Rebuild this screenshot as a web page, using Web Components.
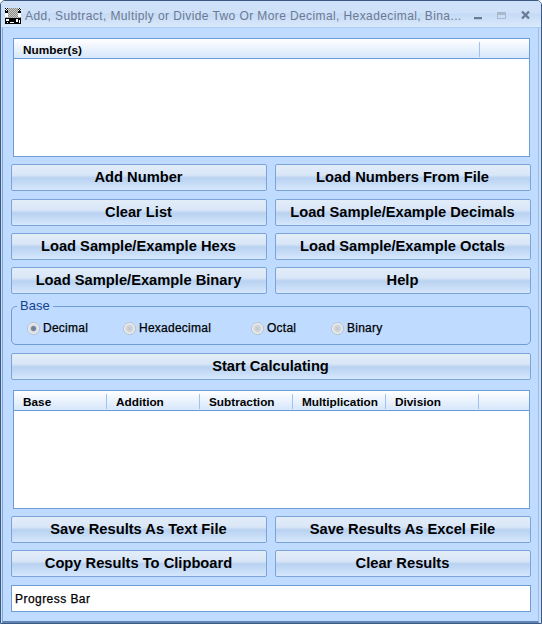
<!DOCTYPE html>
<html>
<head>
<meta charset="utf-8">
<title>Calculator</title>
<style>
  html, body { margin: 0; padding: 0; }
  body { width: 542px; height: 624px; overflow: hidden; font-family: "Liberation Sans", Arial, sans-serif; }
</style>
</head>
<body>
<calc-window title-text="Add, Subtract, Multiply or Divide Two Or More Decimal, Hexadecimal, Bina...">
  <list-view columns="Number(s):467,:49"></list-view>
  <button-grid class="top">
    <push-button>Add Number</push-button>
    <push-button>Load Numbers From File</push-button>
    <push-button>Clear List</push-button>
    <push-button>Load Sample/Example Decimals</push-button>
    <push-button>Load Sample/Example Hexs</push-button>
    <push-button>Load Sample/Example Octals</push-button>
    <push-button>Load Sample/Example Binary</push-button>
    <push-button>Help</push-button>
  </button-grid>
  <base-group></base-group>
  <push-button class="wide">Start Calculating</push-button>
  <list-view class="results" columns="Base:93,Addition:93,Subtraction:93,Multiplication:93,Division:93,:50"></list-view>
  <button-grid>
    <push-button>Save Results As Text File</push-button>
    <push-button>Save Results As Excel File</push-button>
    <push-button>Copy Results To Clipboard</push-button>
    <push-button>Clear Results</push-button>
  </button-grid>
  <progress-box>Progress Bar</progress-box>
</calc-window>

<script>
class CalcWindow extends HTMLElement {
  constructor() {
    super();
    this.attachShadow({mode: 'open'});
    this.shadowRoot.innerHTML = `
      <style>
        :host {
          display: flex;
          flex-direction: column;
          box-sizing: border-box;
          width: 542px;
          height: 624px;
          background: #c8dcf6;
          border: 1px solid #3b5a82;
          border-radius: 5px 5px 0 0;
          overflow: hidden;
        }
        #title {
          display: flex;
          align-items: center;
          height: 27px;
          flex: none;
          box-sizing: border-box;
          padding: 3px 0 0 4px;
          background: linear-gradient(#cfe1f8, #cfe1f8 45%, #c4daf6 50%, #dbe9fb);
          border-bottom: 1px solid #a9cdf5;
        }
        #text {
          margin-left: 4px;
          font-size: 12px;
          letter-spacing: 0.4px;
          color: #6b7a92;
          white-space: nowrap;
        }
        #controls { margin-left: auto; display: flex; margin-top: -3px; }
        #controls svg { display: block; }
        #client {
          flex: 1;
          display: flex;
          flex-direction: column;
          box-sizing: border-box;
          margin: 0 2px 0 1px;
          padding: 10px 0 8px 8px;
          background: #bfdbff;
          border-left: 1px solid #7fa6d8;
          border-right: 1px solid #9dbde6;
          border-bottom: 2px solid #5f84b6;
        }
      </style>
      <div id="title">
        <svg width="16" height="16" viewBox="0 0 16 16" shape-rendering="crispEdges">
          <defs>
            <pattern id="dots" width="2" height="2" patternUnits="userSpaceOnUse">
              <rect width="2" height="2" fill="#c8c8c8"/>
              <rect width="1" height="1" fill="#8e8e8e"/>
              <rect x="1" y="1" width="1" height="1" fill="#8e8e8e"/>
            </pattern>
            <pattern id="dither" width="2" height="2" patternUnits="userSpaceOnUse">
              <rect width="2" height="2" fill="#fff"/>
              <rect width="1" height="1" fill="#000"/>
              <rect x="1" y="1" width="1" height="1" fill="#000"/>
            </pattern>
          </defs>
          <rect width="16" height="16" fill="#fff"/>
          <rect x="0" y="0" width="4" height="3" fill="url(#dither)"/>
          <rect x="12" y="0" width="4" height="3" fill="url(#dither)"/>
          <rect x="3" y="0" width="10" height="9" fill="url(#dots)"/>
          <rect x="0" y="3" width="3" height="2" fill="#000"/>
          <rect x="13" y="3" width="3" height="2" fill="#000"/>
          <rect x="0" y="9" width="16" height="1" fill="url(#dots)"/>
          <rect x="0" y="10" width="16" height="6" fill="#000"/>
          <rect x="1" y="11" width="3" height="2" fill="#fff"/>
          <rect x="11" y="11" width="2" height="3" fill="#fff"/>
          <rect x="14" y="12" width="1" height="3" fill="#fff"/>
          <rect x="5" y="14" width="4" height="1" fill="#fff"/>
          <rect x="2" y="14" width="1" height="1" fill="#fff"/>
        </svg>
        <span id="text"></span>
        <div id="controls">
          <svg width="77" height="26" viewBox="0 0 77 26" shape-rendering="crispEdges">
            <rect x="10" y="16" width="8" height="2" fill="#6a7b93"/>
            <rect x="10" y="18" width="8" height="1" fill="#b4c8e2"/>
            <rect x="33.5" y="11.5" width="8" height="6" fill="none" stroke="#a9b8ca"/>
            <rect x="33" y="11" width="9" height="3" fill="#a9b8ca"/>
            <path d="M58 10.5l7 7M65 10.5l-7 7" stroke="#6a7b93" stroke-width="2.4" fill="none" shape-rendering="auto"/>
          </svg>
        </div>
      </div>
      <div id="client"><slot></slot></div>
    `;
  }

  connectedCallback() {
    this.shadowRoot.getElementById('text').textContent = this.getAttribute('title-text');
  }
}

class ListView extends HTMLElement {
  constructor() {
    super();
    this.attachShadow({mode: 'open'});
    this.shadowRoot.innerHTML = `
      <style>
        :host {
          display: block;
          box-sizing: border-box;
          height: 119px;
          margin: 0 0 7px 2px;
          width: 517px;
          background: #fff;
          border: 1px solid #6f9bd6;
        }
        :host(.results) { margin-top: 10px; }
        #head {
          display: flex;
          height: 20px;
          padding-top: 3px;
          box-sizing: border-box;
          background: linear-gradient(#ffffff, #d6e6fb);
          border-bottom: 1px solid #6f9bd6;
          font-size: 11.8px;
          font-weight: bold;
          color: #000;
        }
        .col {
          box-sizing: border-box;
          padding-left: 9px;
          line-height: 17px;
          border-right: 1px solid #9cc3f3;
          height: 15px;
          white-space: nowrap;
        }
        .col:last-child { border-right: none; }
      </style>
      <div id="head"></div>
    `;
  }

  connectedCallback() {
    const head = this.shadowRoot.getElementById('head');
    for (const spec of this.getAttribute('columns').split(',')) {
      const [name, width] = spec.split(':');
      const col = document.createElement('div');
      col.className = 'col';
      col.style.width = width + 'px';
      col.textContent = name;
      head.append(col);
    }
  }
}

class ButtonGrid extends HTMLElement {
  constructor() {
    super();
    this.attachShadow({mode: 'open'});
    this.shadowRoot.innerHTML = `
      <style>
        :host {
          display: grid;
          grid-template-columns: 256px 256px;
          column-gap: 8px;
          row-gap: 7px;
          width: 520px;
          margin-bottom: 8px;
        }
        :host(.top) { grid-template-rows: 28px 27px 27px 27px; }
      </style>
      <slot></slot>
    `;
  }
}

class PushButton extends HTMLElement {
  constructor() {
    super();
    this.attachShadow({mode: 'open'});
    this.shadowRoot.innerHTML = `
      <style>
        :host {
          display: flex;
          align-items: center;
          justify-content: center;
          box-sizing: border-box;
          height: 27px;
          padding: 0 1px 2px 0;
          border: 1px solid #7da4d8;
          border-radius: 2px;
          background: linear-gradient(#e3edf9, #d9e6f7 40%, #b9d2f1 52%, #d5e7fc);
          font-size: 14.7px;
          font-weight: bold;
          color: #000;
          white-space: nowrap;
        }
        :host(.wide) { width: 520px; }
      </style>
      <slot></slot>
    `;
  }
}

class RadioOption extends HTMLElement {
  constructor() {
    super();
    this.attachShadow({mode: 'open'});
    this.shadowRoot.innerHTML = `
      <style>
        :host {
          display: flex;
          align-items: center;
          gap: 3px;
          font-size: 12px;
          letter-spacing: 0.25px;
          -webkit-text-stroke: 0.25px #000;
          color: #000;
        }
        #dot {
          box-sizing: border-box;
          width: 13px;
          height: 13px;
          margin-left: -1px;
          border-radius: 50%;
          border: 1px solid #b3bfcd;
          background: radial-gradient(circle, #c2c7cd 0, #d5d8dc 45%, #fbfcfd 75%);
          display: flex;
          align-items: center;
          justify-content: center;
        }
        :host([checked]) #dot::after {
          content: "";
          width: 5px;
          height: 5px;
          border-radius: 50%;
          background: #6d8199;
        }
      </style>
      <span id="dot"></span><slot></slot>
    `;
  }
}

class BaseGroup extends HTMLElement {
  constructor() {
    super();
    this.attachShadow({mode: 'open'});
    this.shadowRoot.innerHTML = `
      <style>
        :host {
          display: block;
          position: relative;
          box-sizing: border-box;
          width: 520px;
          height: 39px;
          margin: 4px 0 8px;
          border: 1px solid #6f9bd6;
          border-radius: 5px;
        }
        #legend {
          position: absolute;
          left: 5px;
          top: -8px;
          padding: 0 3px;
          background: #bfdbff;
          font-size: 13px;
          line-height: 14px;
          color: #15428b;
        }
        #options {
          display: grid;
          grid-template-columns: 96px 128px 80px auto;
          padding: 14px 0 0 16px;
        }
      </style>
      <span id="legend">Base</span>
      <div id="options">
        <radio-option checked>Decimal</radio-option>
        <radio-option>Hexadecimal</radio-option>
        <radio-option>Octal</radio-option>
        <radio-option>Binary</radio-option>
      </div>
    `;
  }
}

class ProgressBox extends HTMLElement {
  constructor() {
    super();
    this.attachShadow({mode: 'open'});
    this.shadowRoot.innerHTML = `
      <style>
        :host {
          display: flex;
          align-items: center;
          box-sizing: border-box;
          width: 520px;
          height: 27px;
          padding-left: 3px;
          background: #fff;
          border: 1px solid #6f9bd6;
          font-size: 12px;
          letter-spacing: 0.45px;
          -webkit-text-stroke: 0.25px #000;
          color: #000;
        }
      </style>
      <slot></slot>
    `;
  }
}

customElements.define('radio-option', RadioOption);
customElements.define('calc-window', CalcWindow);
customElements.define('list-view', ListView);
customElements.define('button-grid', ButtonGrid);
customElements.define('push-button', PushButton);
customElements.define('base-group', BaseGroup);
customElements.define('progress-box', ProgressBox);
</script>
</body>
</html>
